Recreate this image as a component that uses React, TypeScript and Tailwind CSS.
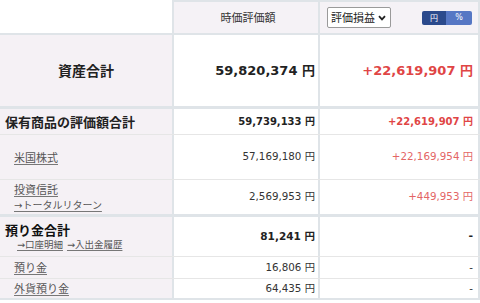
import React from "react";

const NUM = "font-['DejaVu_Sans','Noto_Sans_CJK_JP',sans-serif]";
const JP = "font-['Noto_Sans_CJK_JP',sans-serif]";
const JPA = "font-['DejaVu_Sans','Noto_Sans_CJK_JP',sans-serif]";

const leftCell = "bg-[#f5f1f5] border-r-2 border-[#dfe4e8]";
const midCell = "border-r-2 border-[#dfe4e8] flex items-center justify-end pr-[3px]";
const rightCell = "border-r-2 border-[#dfe4e8] flex items-center justify-end pr-[5px]";
const cols = "grid grid-cols-[174px_146px_160px]";

function Link({ children, className = "" }: { children: React.ReactNode; className?: string }) {
  return (
    <span className={`underline underline-offset-2 decoration-[#777] text-[#555] ${className}`}>
      {children}
    </span>
  );
}

export default function App() {
  return (
    <div className={`w-[480px] h-[303px] bg-white overflow-hidden ${NUM}`}>
      {/* header */}
      <div className={`${cols} h-[35px] border-b-2 border-[#dfe4e8]`}>
        <div className="border-r-2 border-[#dfe4e8]" />
        <div className={`border-r-2 border-t-2 border-[#dfe4e8] bg-[#f5f2f6] flex items-center justify-center pl-[4px] ${JP} text-[11px] text-[#333]`}>
          時価評価額
        </div>
        <div className="border-r-2 border-t-2 border-[#dfe4e8] bg-[#f5f2f6] flex items-center pl-[7px] pr-[6px] justify-between">
          <div className="w-[64px] h-[21px] border border-[#9a9a9a] rounded-[2px] bg-white flex items-center pl-[3px] gap-[3px]">
            <span className={`${JP} text-[11px] text-[#222]`}>評価損益</span>
            <svg width="8" height="6" viewBox="0 0 8 6">
              <path d="M1 1.2 L4 4.4 L7 1.2" fill="none" stroke="#222" strokeWidth="1.8" />
            </svg>
          </div>
          <div className="flex h-[14px] w-[50px] rounded-[2px] overflow-hidden">
            <div className={`w-[24px] bg-[#2b4a8c] flex items-center justify-center text-[8px] text-white ${JP}`}>円</div>
            <div className="flex-1 bg-[#5677c4] flex items-center justify-center text-[8px] text-white">%</div>
          </div>
        </div>
      </div>

      {/* 資産合計 */}
      <div className={`${cols} h-[74px] border-b-[3px] border-[#dfe4e8]`}>
        <div className={`${leftCell} flex items-center justify-center`}>
          <span className={`${JP} font-bold text-[14px] text-[#222]`}>資産合計</span>
        </div>
        <div className={midCell}>
          <span className="font-bold text-[13px] text-[#222]">59,820,374 円</span>
        </div>
        <div className={rightCell}>
          <span className="font-bold text-[13px] text-[#e04545]">+22,619,907 円</span>
        </div>
      </div>

      {/* 保有商品 */}
      <div className={`${cols} h-[26px] border-b border-[#e6e6e6]`}>
        <div className={`${leftCell} flex items-center pl-[5px]`}>
          <span className={`${JP} font-bold text-[13px] text-[#222]`}>保有商品の評価額合計</span>
        </div>
        <div className={midCell}>
          <span className="font-bold text-[10px] text-[#222]">59,739,133 円</span>
        </div>
        <div className={rightCell}>
          <span className="font-bold text-[10px] text-[#e04545]">+22,619,907 円</span>
        </div>
      </div>

      {/* 米国株式 */}
      <div className={`${cols} h-[45px] border-b border-[#e6e6e6]`}>
        <div className={`${leftCell} flex items-center pl-[14px]`}>
          <Link className={`${JP} text-[11px]`}>米国株式</Link>
        </div>
        <div className={midCell}>
          <span className="text-[10.3px] text-[#333]">57,169,180 円</span>
        </div>
        <div className={rightCell}>
          <span className="text-[10.3px] text-[#e36565]">+22,169,954 円</span>
        </div>
      </div>

      {/* 投資信託 */}
      <div className={`${cols} h-[37px] border-b-[3px] border-[#dfe4e8]`}>
        <div className={`${leftCell} flex flex-col justify-center pl-[14px] leading-[14px] gap-[1px]`}>
          <div><Link className={`${JP} text-[11px]`}>投資信託</Link></div>
          <div><Link className={`${JPA} text-[10px]`}>→トータルリターン</Link></div>
        </div>
        <div className={midCell}>
          <span className="text-[10.3px] text-[#333]">2,569,953 円</span>
        </div>
        <div className={rightCell}>
          <span className="text-[10.3px] text-[#e36565]">+449,953 円</span>
        </div>
      </div>

      {/* 預り金合計 */}
      <div className={`${cols} h-[40px] border-b border-[#e6e6e6]`}>
        <div className={`${leftCell} flex flex-col justify-center pl-[5px] leading-[17px]`}>
          <span className={`${JP} font-bold text-[13px] text-[#111]`}>預り金合計</span>
          <div className="pl-[12px] flex gap-[4px] leading-[14px]">
            <Link className={`${JPA} text-[9.5px]`}>→口座明細</Link>
            <Link className={`${JPA} text-[9.5px]`}>→入出金履歴</Link>
          </div>
        </div>
        <div className={midCell}>
          <span className="font-bold text-[10.5px] text-[#222]">81,241 円</span>
        </div>
        <div className={rightCell}>
          <span className="font-bold text-[11px] text-[#222]">-</span>
        </div>
      </div>

      {/* 預り金 */}
      <div className={`${cols} h-[22px] border-b border-[#e6e6e6]`}>
        <div className={`${leftCell} flex items-center pl-[14px]`}>
          <Link className={`${JP} text-[11px]`}>預り金</Link>
        </div>
        <div className={midCell}>
          <span className="text-[10.3px] text-[#333]">16,806 円</span>
        </div>
        <div className={rightCell}>
          <span className="text-[10.3px] text-[#333]">-</span>
        </div>
      </div>

      {/* 外貨預り金 */}
      <div className={`${cols} h-[21px] border-b-2 border-[#dfe4e8]`}>
        <div className={`${leftCell} flex items-center pl-[14px]`}>
          <Link className={`${JP} text-[11px]`}>外貨預り金</Link>
        </div>
        <div className={midCell}>
          <span className="text-[10.3px] text-[#333]">64,435 円</span>
        </div>
        <div className={rightCell}>
          <span className="text-[10.3px] text-[#333]">-</span>
        </div>
      </div>
    </div>
  );
}
